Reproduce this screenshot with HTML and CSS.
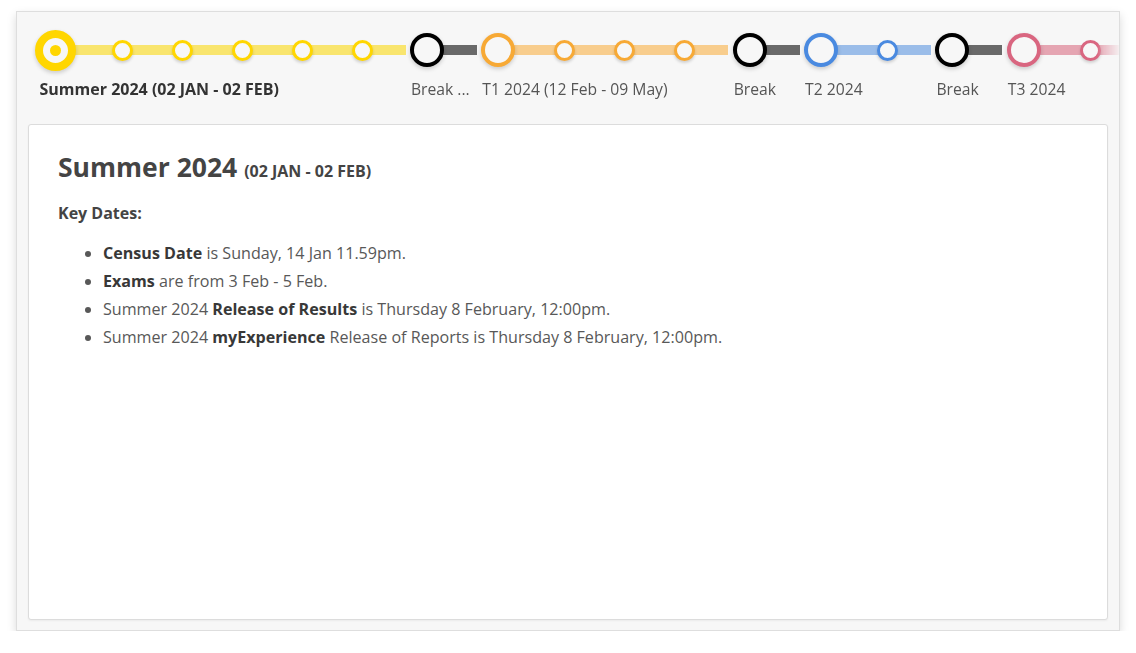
FILE: index.html
```html
<!DOCTYPE html>
<html>
<head>
<meta charset="utf-8">
<link rel="stylesheet" href="styles.css">
</head>
<body>
<div class="panel">
  <div class="timeline">
    <div class="seg seg-summer">
      <div class="track">
        <span class="node node-active"></span>
        <span class="node small"></span>
        <span class="node small"></span>
        <span class="node small"></span>
        <span class="node small"></span>
        <span class="node small"></span>
      </div>
      <div class="label label-active">Summer 2024 (02 JAN - 02 FEB)</div>
    </div>
    <div class="seg seg-break">
      <div class="track"><span class="node"></span></div>
      <div class="label">Break ...</div>
    </div>
    <div class="seg seg-t1">
      <div class="track">
        <span class="node"></span>
        <span class="node small"></span>
        <span class="node small"></span>
        <span class="node small"></span>
      </div>
      <div class="label">T1 2024 (12 Feb - 09 May)</div>
    </div>
    <div class="seg seg-break">
      <div class="track"><span class="node"></span></div>
      <div class="label">Break</div>
    </div>
    <div class="seg seg-t2">
      <div class="track">
        <span class="node"></span>
        <span class="node small"></span>
      </div>
      <div class="label">T2 2024</div>
    </div>
    <div class="seg seg-break">
      <div class="track"><span class="node"></span></div>
      <div class="label">Break</div>
    </div>
    <div class="seg seg-t3">
      <div class="track">
        <span class="node"></span>
        <span class="node small"></span>
        <span class="node small"></span>
      </div>
      <div class="label">T3 2024</div>
    </div>
  </div>

  <div class="card">
    <h2 class="title">Summer 2024 <small class="title-dates">(02 JAN - 02 FEB)</small></h2>
    <p class="key">Key Dates:</p>
    <ul class="dates">
      <li><b>Census Date</b> is Sunday, 14 Jan 11.59pm.</li>
      <li><b>Exams</b> are from 3 Feb - 5 Feb.</li>
      <li>Summer 2024 <b>Release of Results</b> is Thursday 8 February, 12:00pm.</li>
      <li>Summer 2024 <b>myExperience</b> Release of Reports is Thursday 8 February, 12:00pm.</li>
    </ul>
  </div>
</div>
</body>
</html>
```

FILE: styles.css
```css
html, body {
  margin: 0;
  padding: 0;
  background: #ffffff;
}
body {
  padding: 11px 16px 0 16px;
  font-family: "Open Sans", "Noto Sans", sans-serif;
  color: #444;
}
.panel {
  width: 1080px;
  height: 618px;
  box-sizing: content-box;
  background: #f7f7f7;
  border: 1px solid #dedede;
  box-shadow: 0 4px 9px rgba(0, 0, 0, 0.15);
  padding: 0 11px;
  display: flex;
  flex-direction: column;
}
.timeline {
  display: flex;
  gap: 4.4px;
  padding: 17px 0 0 10.5px;
  margin-right: -11px;
  overflow: hidden;
  -webkit-mask-image: linear-gradient(to right, #000 calc(100% - 22px), rgba(0,0,0,0.1) 100%);
  mask-image: linear-gradient(to right, #000 calc(100% - 22px), rgba(0,0,0,0.1) 100%);
}
.seg {
  display: flex;
  flex-direction: column;
  flex: none;
  min-width: 0;
}
.track {
  position: relative;
  height: 42px;
  display: flex;
  align-items: center;
  gap: 39px;
  padding-right: 33px;
}
.track::before {
  content: "";
  position: absolute;
  left: 17px;
  right: 0;
  top: 16px;
  height: 10px;
}
.node {
  position: relative;
  z-index: 1;
  flex: none;
  width: 34px;
  height: 34px;
  box-sizing: border-box;
  border-radius: 50%;
  border: 4px solid #000;
  background: #f7f7f7;
  box-shadow: 0 2px 4px rgba(0, 0, 0, 0.18);
  display: flex;
  align-items: center;
  justify-content: center;
}
.node.small {
  width: 21px;
  height: 21px;
  border-width: 3px;
  box-shadow: 0 2px 3px rgba(0, 0, 0, 0.16);
}
.node-active {
  width: 41px;
  height: 41px;
  margin: 0 -3.5px;
  border-width: 8px;
}
.node-active::after {
  content: "";
  width: 11px;
  height: 11px;
  border-radius: 50%;
  background: #ffd600;
}

.seg-summer .node { border-color: #ffd600; }
.seg-summer .track::before { background: #f9e56e; }
.seg-break .node { border-color: #000; }
.seg-break .track::before { background: #6a6a6a; }
.seg-t1 .node { border-color: #f7a935; }
.seg-t1 .track::before { background: #f8cd8d; }
.seg-t2 .node { border-color: #4a8ae0; }
.seg-t2 .track::before { background: #9bbde9; }
.seg-t3 .node { border-color: #d96680; }
.seg-t3 .track::before { background: #e5a5b2; }

.seg-break { width: 67px; }
.seg-break .track { padding-right: 0; }

.label {
  margin-top: 8px;
  font-size: 15.7px;
  line-height: 20px;
  color: #555;
  white-space: nowrap;
  overflow: hidden;
  text-overflow: ellipsis;
  padding-left: 1px;
}
.label-active {
  font-size: 16px;
  font-weight: 700;
  color: #333;
}

.card {
  margin-top: 25px;
  height: 496px;
  box-sizing: border-box;
  background: #ffffff;
  border: 1px solid #dcdcdc;
  border-radius: 3px;
  box-shadow: 0 1px 2px rgba(0, 0, 0, 0.05);
  padding: 26px 29px;
}
.title {
  margin: 0;
  font-size: 26.5px;
  line-height: 32px;
  font-weight: 700;
  color: #444;
}
.title-dates {
  font-size: 16px;
  line-height: 1;
  font-weight: 700;
  color: #444;
}
.key {
  margin: 19px 0 0 0;
  font-size: 16px;
  line-height: 22px;
  font-weight: 700;
  color: #444;
}
.dates {
  margin: 15px 0 0 0;
  padding-left: 45px;
  font-size: 16.1px;
  line-height: 28px;
  color: #585858;
}
.dates b {
  font-weight: 700;
  color: #383838;
}
```
